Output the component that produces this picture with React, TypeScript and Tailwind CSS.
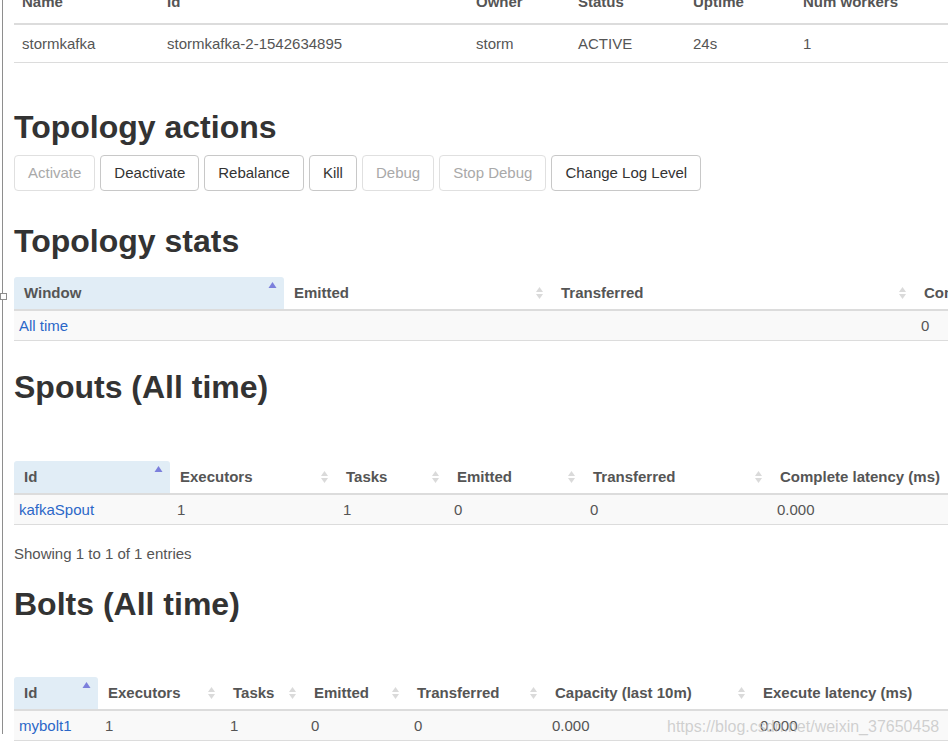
import React from "react";

type Col = { label: string; width: number; sorted?: boolean };

const SortIcon: React.FC<{ asc?: boolean }> = ({ asc }) =>
  asc ? (
    <svg width="9" height="16" viewBox="0 0 9 16" className="-mt-[8px] shrink-0">
      <polygon points="0.5,7 4.5,1 8.5,7" fill="#7b7fdc" />
    </svg>
  ) : (
    <svg width="9" height="16" viewBox="0 0 9 16" className="shrink-0">
      <polygon points="1,7 4.5,2 8,7" fill="#dadada" />
      <polygon points="1,9 4.5,14 8,9" fill="#dadada" />
    </svg>
  );

const DataTable: React.FC<{ cols: Col[]; row: string[] }> = ({ cols, row }) => (
  <div className="w-[1300px]">
    <div className="flex h-[34px] border-b-2 border-[#dcdcdc]">
      {cols.map((c) => (
        <div
          key={c.label}
          style={{ width: c.width }}
          className={`flex shrink-0 items-center justify-between pl-[10px] pr-[7px] font-bold text-[#555] ${
            c.sorted ? "rounded-t-[3px] bg-[#e1edf6]" : ""
          }`}
        >
          <span className="whitespace-nowrap">{c.label}</span>
          <SortIcon asc={c.sorted} />
        </div>
      ))}
    </div>
    <div className="flex h-[30px] items-center border-b border-[#dcdcdc] bg-[#f9f9f9]">
      {cols.map((c, i) => (
        <div
          key={c.label}
          style={{ width: c.width }}
          className={`shrink-0 whitespace-nowrap ${
            i === 0 ? "pl-[5px] text-[#2b67c8]" : "pl-[7px] text-[#555]"
          }`}
        >
          {row[i]}
        </div>
      ))}
    </div>
  </div>
);

const Heading: React.FC<{ children: React.ReactNode; className?: string }> = ({
  children,
  className = "",
}) => (
  <h2 className={`text-[32px] font-bold leading-[35px] text-[#333] ${className}`}>{children}</h2>
);

const actions = [
  { label: "Activate", enabled: false },
  { label: "Deactivate", enabled: true },
  { label: "Rebalance", enabled: true },
  { label: "Kill", enabled: true },
  { label: "Debug", enabled: false },
  { label: "Stop Debug", enabled: false },
  { label: "Change Log Level", enabled: true },
];

const summaryCols = [
  { label: "Name", width: 145, value: "stormkafka" },
  { label: "Id", width: 309, value: "stormkafka-2-1542634895" },
  { label: "Owner", width: 102, value: "storm" },
  { label: "Status", width: 115, value: "ACTIVE" },
  { label: "Uptime", width: 110, value: "24s" },
  { label: "Num workers", width: 200, value: "1" },
];

const App: React.FC = () => {
  return (
    <div className="relative h-[747px] w-[948px] overflow-hidden bg-white font-['Liberation_Sans',Arial,sans-serif] text-[15px] leading-[20px] text-[#555]">
      <div className="ml-[2px] h-full border-l border-[#8e8e8e] pl-[11px]">
        {/* topology summary */}
        <div className="-mt-[13px] w-[1300px]">
          <div className="flex h-[38px] items-start border-b-2 border-[#dcdcdc] pt-[5px]">
            {summaryCols.map((c) => (
              <div key={c.label} style={{ width: c.width }} className="shrink-0 pl-[8px] font-bold">
                {c.label}
              </div>
            ))}
          </div>
          <div className="flex h-[38px] items-center border-b border-[#dcdcdc]">
            {summaryCols.map((c) => (
              <div key={c.label} style={{ width: c.width }} className="shrink-0 pl-[8px]">
                {c.value}
              </div>
            ))}
          </div>
        </div>

        <Heading className="mt-[47px]">Topology actions</Heading>
        <div className="mt-[10px] flex gap-[5px]">
          {actions.map((a) => (
            <button
              key={a.label}
              className={`h-[36px] whitespace-nowrap rounded-[4px] border bg-white px-[13px] ${
                a.enabled ? "border-[#c8c8c8] text-[#333]" : "border-[#e0e0e0] text-[#a9a9a9]"
              }`}
            >
              {a.label}
            </button>
          ))}
        </div>

        <Heading className="mt-[33px]">Topology stats</Heading>
        <div className="mt-[18px]">
          <DataTable
            cols={[
              { label: "Window", width: 270, sorted: true },
              { label: "Emitted", width: 267 },
              { label: "Transferred", width: 363 },
              { label: "Complete latency (ms)", width: 220 },
            ]}
            row={["All time", "", "", "0"]}
          />
        </div>

        <Heading className="mt-[29px]">Spouts (All time)</Heading>
        <div className="mt-[56px]">
          <DataTable
            cols={[
              { label: "Id", width: 156, sorted: true },
              { label: "Executors", width: 166 },
              { label: "Tasks", width: 111 },
              { label: "Emitted", width: 136 },
              { label: "Transferred", width: 187 },
              { label: "Complete latency (ms)", width: 220 },
            ]}
            row={["kafkaSpout", "1", "1", "0", "0", "0.000"]}
          />
        </div>
        <p className="mt-[19px]">Showing 1 to 1 of 1 entries</p>

        <Heading className="mt-[23px]">Bolts (All time)</Heading>
        <div className="mt-[55px]">
          <DataTable
            cols={[
              { label: "Id", width: 84, sorted: true },
              { label: "Executors", width: 125 },
              { label: "Tasks", width: 81 },
              { label: "Emitted", width: 103 },
              { label: "Transferred", width: 138 },
              { label: "Capacity (last 10m)", width: 208 },
              { label: "Execute latency (ms)", width: 220 },
            ]}
            row={["mybolt1", "1", "1", "0", "0", "0.000", "0.000"]}
          />
        </div>
      </div>

      {/* resize handle on the frame edge */}
      <div className="absolute left-0 top-[293px] h-[7px] w-[7px] border border-[#8e8e8e] bg-white" />

      {/* watermark */}
      <div className="pointer-events-none absolute left-[667px] top-[716px] whitespace-nowrap text-[16px] leading-[22px] text-[#bdbdbd]/70">
        https://blog.csdn.net/weixin_37650458
      </div>
    </div>
  );
};

export default App;
